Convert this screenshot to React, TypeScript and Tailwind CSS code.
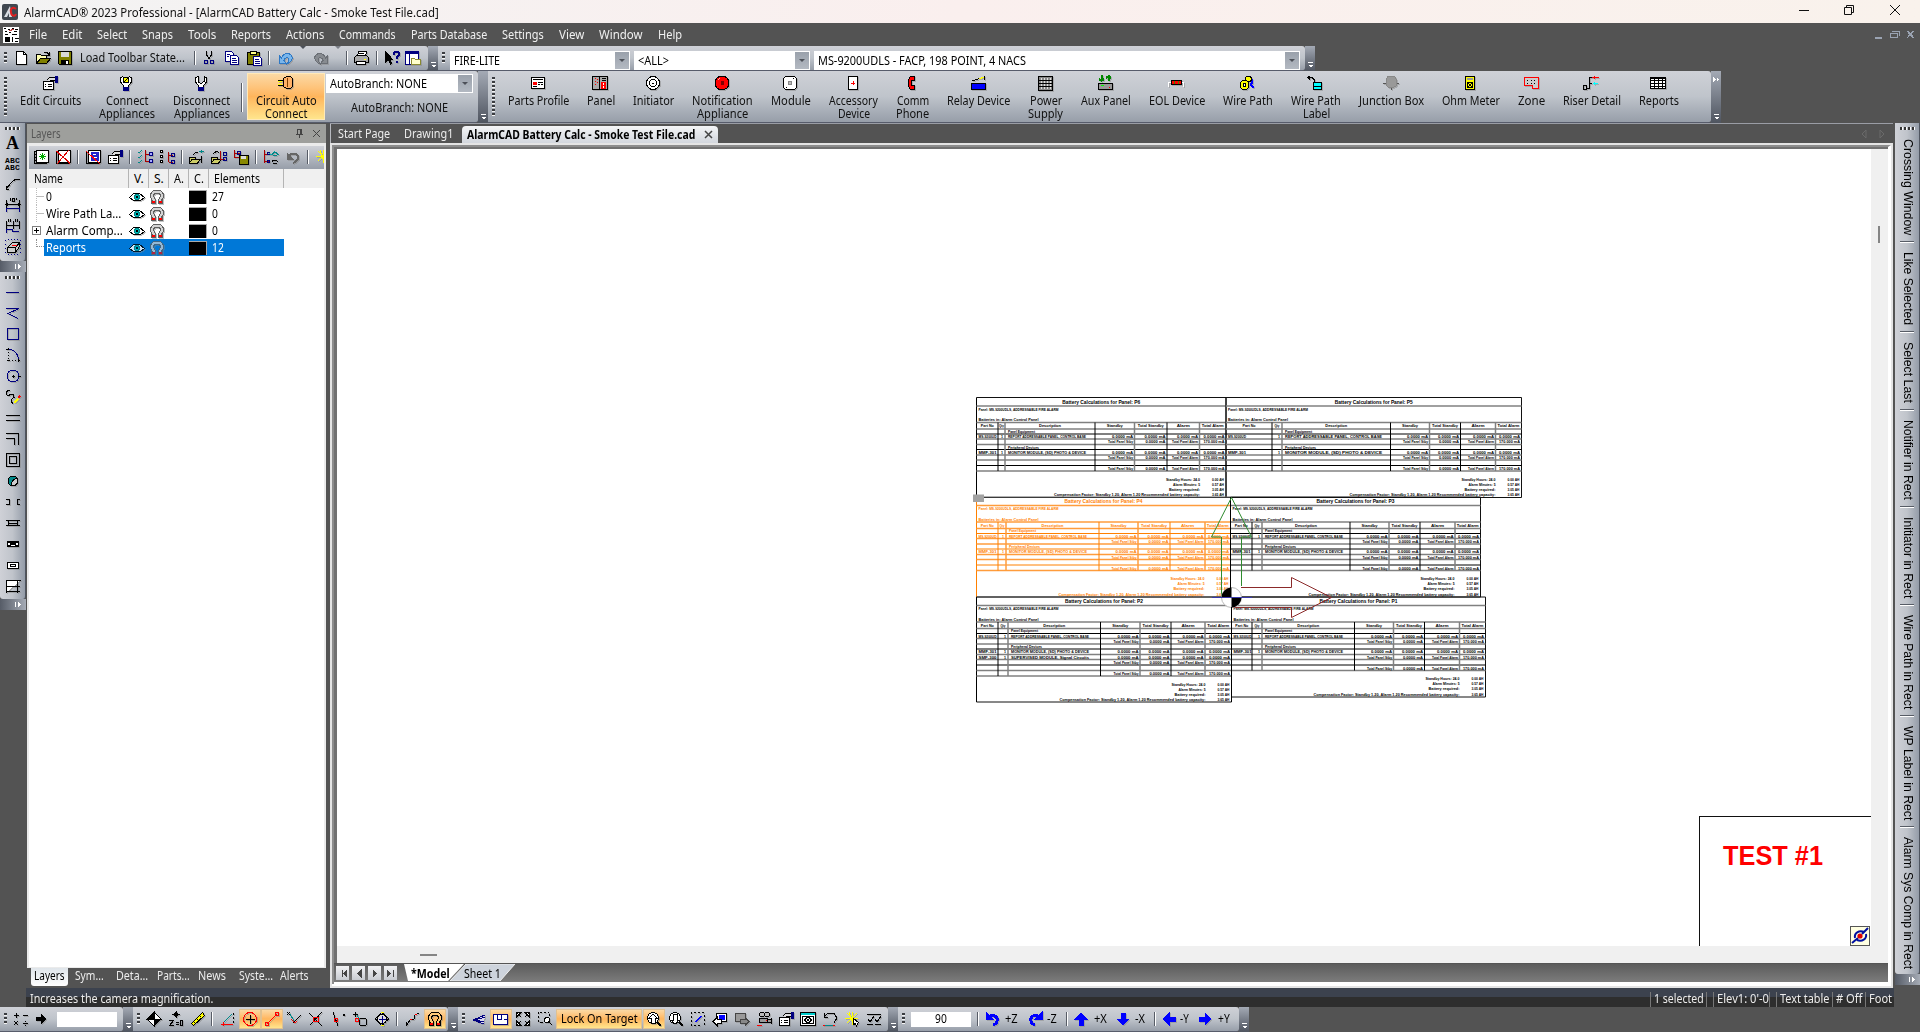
import { useLayoutEffect, useRef } from "react";
import type { ReactNode } from "react";

/* ---------- text that is fitted to the width (or height) of its box ---------- */
function Fit({ t, c = "", v = false }: { t: string; c?: string; v?: boolean }) {
  const outer = useRef<HTMLSpanElement>(null);
  const inner = useRef<HTMLSpanElement>(null);
  useLayoutEffect(() => {
    const o = outer.current;
    const i = inner.current;
    if (!o || !i) return;
    i.style.transform = v
      ? `scaleY(${o.clientHeight / i.offsetHeight})`
      : `scaleX(${o.clientWidth / i.offsetWidth})`;
  }, [t, v]);
  return (
    <span ref={outer} className={"block shrink-0 whitespace-nowrap " + c}>
      <span ref={inner} className={"inline-block " + (v ? "origin-top" : "origin-left")}>
        {t}
      </span>
    </span>
  );
}

/* ---------- icons: lists of [stroke, path, fill, stroke width] on a 16px grid ---------- */
type Shape = [string, string, string?, number?];
const K = "#000";
const N = "#000080";
const R = "#f00";
const W = "#fff";
const ring = (cx: number, cy: number, r: number) =>
  `M${cx - r} ${cy}a${r} ${r} 0 1 0 ${2 * r} 0a${r} ${r} 0 1 0 ${-2 * r} 0`;
const ARCH_OUT = "M2.500 14.500v-3h1L1.500 8V5l3-3.500h7l3 3.500v3l-2 3.500h1v3h-4v-4l2-3V6L10 4.500H6L4.500 6v1.500l2 3v4z";
const ARCH_TIPS = "M3 12h3v2H3zM10 12h3v2h-3z";

const icons: Record<string, Shape[]> = {
  fresh: [[K, "M3.5 1.5h7l3 3v10h-10z", W], [K, "M10.5 1.5v3h3"]],
  open: [[K, "M1.5 13.5v-9h4l1 1h5v3", "#ffffb0"], [K, "M1.5 13.5l4-5h10l-4 5z", "#808000"], [K, "M9 2.5h3l2 2M14.5 2v3h-3"]],
  save: [[K, "M1.5 1.5h13v13h-12l-1-1z", "#808000"], ["none", "M4 2h8v5H4z", "#d8d8d8"], ["none", "M4 10h8v4H4z", K], ["none", "M9 11h2v3H9z", W]],
  cut: [[K, "M5.5 1v4l3 4M10.5 1v4l-3 4"], [N, ring(5, 12, 2)], [N, ring(11, 12, 2)]],
  copy: [[N, "M1.5 1.5h6l2 2v8h-8z", W], [N, "M6.5 5.5h6l2 2v7h-8z", W], [N, "M3 4.5h3M3 6.5h2M8 8.5h4M8 10.5h5M8 12.5h5"]],
  paste: [[K, "M1.5 2.5h12v12h-12z", "#808000"], [K, "M4.5 1.5h6v3h-6z", "#ff8"], [N, "M7.5 6.5h6l2 2v7h-8z", W], [N, "M9 9.5h4M9 11.5h5M9 13.5h5"]],
  undo: [["#2f78c4", "M1.500 5.500v8h7L6 10.500C7 7 10 7 10.500 9c.3 2-.5 3-1.500 5C13 12 15 9 14 6.500 12.500 2.500 6 2 3.500 8z", "#79b6ec"]],
  redo: [["#6b6f75", "M14.500 5.500v8h-7L10 10.500C9 7 6 7 5.500 9c-.3 2 .5 3 1.500 5C3 12 1 9 2 6.500 3.500 2.500 10 2 12.500 8z", "#878b90"]],
  print: [[K, "M4.5 6.5l1-5h8l-1 5z", W], [K, "M1.5 7.5l2-2h10l2 2v5h-14z", "#aaa"], [K, "M3.5 11.5h9v3h-9z", W], [K, "M6 3.5h5"], ["none", "M11 9h2v1h-2z", "#ff0"]],
  whats: [[K, "M1.5 1.5v11l3-3 2 5 1-1-2-4h3z", K], [N, "M10 5V3l1-1h3l1 1v2l-2.500 2.500V9M12.500 11v2", "none", 2]],
  panes: [[N, "M.5 1.500h13v13h-13z", W], ["none", "M0 1h14v3H0z", N], [N, "M4.500 4v10"], ["#8a8a30", "M6.500 14.500v-6h3l1 1h5v5z", "#ffc"]],
  props: [[K, "M1.500 6.500h10v8h-10z", W], [K, "M3 9.500h1M6 9.500h4M3 11.500h1M6 11.500h4"], [K, "M5 5l3-3h5v3H9L7 7", "#ddd"], [N, "M13.500 1v6h2V1z", N]],
  plugOn: [[K, "M5 1.500L2.500 3v4l3 3.500v1.500h5v-1.500l3-3.500V3L11 1.500", W], [K, ring(8, 5, 3), "#ff0"], [K, "M6 7l4-4"], [N, "M5.500 12.500h5v3h-5z", N]],
  plugOff: [[K, "M5 1.500L2.500 3v4l3 3.500v1.500h5v-1.500l3-3.500V3L11 1.500v5L9 8H7L5 6.500z", W], [N, "M5.500 12.500h5v3h-5z", N]],
  auto: [[K, "M6.500 3.500l3-2h4l2 2v8l-2 2h-4l-3-2z", "#ffb066"], ["#804000", "M10.500 3v9"], [K, "M1 5.500h5M1 10.500h5"], ["#ff0", "M1 6.500h4M1 9.500h4"]],
  profile: [[K, "M1.500 2.500h13v11h-13z", W], [K, "M3 4.500h10M8 7.500h5M8 9.500h2M11 9.500h2"], ["none", "M3 7h4v3H3z", R], [K, "M3 11.500h4"]],
  panel: [[K, "M.5 1.500h15v13h-15z", "#aaa"], [K, "M7.500 2v12M10 3.500h4M10 5.500h4"], [R, "M3.500 3v1M3.500 6v1M3.500 9v1M5.500 4v1M5.500 7v1"], ["none", "M9 7h5v7H9z", R], [W, "M11.500 8v2M11.500 11v2"]],
  init: [[K, ring(8, 8, 6.500), W], [K, ring(8, 8, 3.500), W], [K, "M7 8.500h2"]],
  bell: [[K, ring(8, 8, 7), R], ["none", "M7 6h3v4H7z", "#800000"], ["#faa", "M4 5l2-2"]],
  module: [[K, "M3.500 1.500h9l2 2v9l-2 2h-9l-2-2v-9z", W], ["#888", ring(8, 8, 2), "#bbb"], [K, "M4 12.500h1M11 3.500h1"]],
  acc: [[K, "M3.500 1.500h9v13h-9z", W], [R, "M8 6v4M6 8h4"]],
  phone: [[K, "M10.500 1.500h-4l-2 3v7l2 3h4v-4h-3v-5h3z", R]],
  relay: [[K, "M1.500 8.500h14v6h-14z", "#00f"], [K, "M2 6l12-4v3"], ["#ff0", "M9 4l5-2"]],
  power: [[K, "M1.500 1.500h14v14h-14z", "#888"], ["#ddd", "M4.500 3v11M7.500 3v11M10.500 3v11M13 3v11"], [K, "M2 5.500h13M2 8.500h13M2 11.500h13"]],
  aux: [["#080", "M4.500 0v6M2 4l2.500 2L7 4M11.500 6V0M9 3l2.500-2L14 3", "none", 2], [K, "M1.500 8.500h14v6h-14z", "#999"], ["#0f0", "M4 10.500h3"], [R, "M12 12.500h1"]],
  eol: [[W, "M.5 12V7.500h3M15.500 12V7.500h-3"], [K, "M3.500 5.500h10v4h-10z", R], ["#480", "M6.500 6v3M10.500 6v3"]],
  wire: [["#00f", "M8 2c5-2 6 5 4 8l3 3", "none", 2], [K, ring(9.500, 4, 3), "#ff0"], [K, ring(5.500, 10, 4.500), "#ff0"], [K, ring(5.500, 10, 1.500), W]],
  wlabel: [[K, "M1 2.500h4l2 2v6M3 1l-2 1.500 2 2"], [K, "M6.500 7.500h8v7h-8z", "#0ff"], [K, "M7 11.500h7"]],
  junction: [["#555", "M0 8.500h16M8.500 1v14"], ["#888", "M4.500 1.500h7l2 3v6l-3 2h-5l-2-2v-6z", "#999"]],
  ohm: [[K, "M3.500 1.500h9v13h-9z", "#ff0"], ["none", "M5 3h6v2H5z", "#999"], [K, "M5 7l6 6M11 7l-6 6"], [K, ring(8, 10, 2.500)]],
  zone: [[R, "M1 2.500h14v11H9v-3H1z", "#ccc"], [K, "M4 5.500h1M7.500 5.500h1M11 5.500h1M4 8.500h1M7.500 8.500h1M11 8.500h1"]],
  riser: [[K, "M.5 10.500h3v4h-3zM4 13.500h2.500v-11H9M6.500 8.500H9"], [R, "M9 2.500h7M11.500 1v3"], ["#0ff", "M10 8.500h5M11.500 7v3"]],
  report: [[K, "M.5 2.500h15v11H.5z", W], [K, "M1 3.500h15M1 5.500h15M1 8.500h15M1 11.500h15M4.500 3v10M8.500 3v10M12.500 3v10"]],
  layerAdd: [[K, "M3.500 1.500h12v12h-12zM1.500 2.500h1M1.500 5.500h1M1.500 8.500h1M1.500 11.500h1", W], [K, "M1.500 2v12.500h12"], ["#0a0", "M9.500 4v7M6 7.500h7M7 5l5 5M12 5l-5 5"]],
  layerDel: [[K, "M3.500 1.500h12v12h-12z", W], [K, "M1.500 2v12.500h12"], ["#d00", "M1 2l14 12M14 1L2 15M2 2l13 13"]],
  layerRec: [[K, "M3.500 1.500h12v12h-12z", W], [K, "M1.500 2v12.500h12"], ["none", "M6 3h8v9H6z", "#22c"], [W, "M8 5.500h3M8 8.500h4"], [R, "M1 2l14 13"]],
  checkTree: [["#088", "M1 3l1 1 3-3M1 8l1 1 3-3M1 13l1 1 3-3"], ["#a00", "M8.500 1v12M8.500 5.500h4M8.500 12.500h4"], [N, "M12 3.500h3v3h-3zM12 10.500h3v3h-3z", "#aaf"]],
  boxTree: [[K, "M1.500 1.500h2v2h-2zM1.500 6.500h2v2h-2zM1.500 11.500h2v2h-2z", W], ["#a00", "M9.500 3v10M9.500 6.500h4M9.500 13.500h4"], [N, "M12 4.500h3v3h-3zM12 11.500h3v3h-3z"]],
  openEye: [[K, "M.5 14v-6h6v2M.5 14l3-4h8l-3 4z", "#cc6"], [K, "M4 6l3-3 2 1"], ["#088", "M10 2.500h5M12 1v3"], [K, "M12.500 7v7"]],
  openTree: [[K, "M.5 14v-6h6v2M.5 14l3-4h7l-3 4z", "#cc6"], [K, "M2 5l4-3 2 2"], ["#a00", "M9.500 2v8h4"], [N, "M12 3h3v3h-3zM12 8.500h3v3h-3z"]],
  treeSave: [["#a00", "M1.500 1v7h4M1.500 4h5"], [N, "M4 2.500h3v3H4z"], [K, "M6.500 6.500h9v9h-9z", "#880"], ["none", "M8 7h5v3H8z", "#ddd"]],
  treeEye: [["#a00", "M1.500 1v13M1.500 5h4M1.500 12h4"], [N, "M4 3.500h2v2H4zM4 11h2v2H4z"], ["#0aa", "M6 4l2 2 4-4"], ["#088", "M9 5.500c2-3 4-3 6 0-2 2-4 2-6 0"], [K, "M9 12.500c2-2 4-2 6 0M10 14h4"]],
  back: [["#666", "M4 7.500C6 3 14 4 13 9c-.3 2-2 3.500-5 5", "none", 2], ["#666", "M2 4v6h6z", "#666"]],
  eye: [[K, "M.5 8.500l4-4h6l5 4-4 3h-7z", W], ["#088", ring(8, 8, 2.500), "#0bb"], ["none", "M7 7h2v2H7z", K]],
  magnet: [["#606060", ARCH_OUT, "#d4d4d4"], ["none", ARCH_TIPS, R]],
  leader: [[K, "M1 14l6-7 3-2.500h5M1 11v3h3"]],
  dim: [[K, "M1.500 4v8M14.500 4v8M1 8.500h14M3 7l-2 1.500L3 10M13 7l2 1.500L13 10M5.500 2v3M7.500 2.500h2v3h-2zM11.500 2v2"], [N, "M1 15.500v-3h13v3"]],
  dims: [[K, "M1.500 4v8M8.500 4v8M14.500 4v8M1 8.500h14M3.500 2v3M5.500 2v3M10.500 2v3M12.500 2v3"], [N, "M1 15.500v-3h6v2h7"]],
  block: [[N, "M.5 1v1M3 .5h1M6 .5h1M9 .5h1M12 .5h1M15.500 1v1M.5 5v1M.5 9v1M.5 13v1M15.500 5v1M15.500 9v1M15.500 13v1M3 15.500h1M6 15.500h1M9 15.500h1M12 15.500h1"], [K, "M2.500 8.500l5-5h7v4l-4 6h-8z", "#ccc"], [K, "M2.500 8.500h8v5M10.500 8.500l4-5"], [R, "M7 6.500h5"]],
  line: [[N, "M1 8.500h13"]],
  poly: [[N, "M1 3.500h13L3 8.500l10 5"]],
  rect: [[N, "M2.500 2.500h11v11h-11z"]],
  arc: [[K, "M3.500 1v2M3.500 5v1M3.500 8v1M3.500 11v1M1 2.500h4M2 13.500h3M7 13.500h1M10 13.500h1M13 13.500h2M13.500 12v3"], [N, "M4 2.500c5 0 9 4 9.500 10"]],
  circle: [[N, ring(8, 8, 6)], [K, "M7 8.500h3M8.500 7v3M12.500 8.500h4"]],
  free: [[K, "M5 1.500H3l-2 2v2l2 1 3-1h2l1 3-3 2v2l2 2"], ["#ff0", "M9 14l4-4", "none", 2], [R, "M13 9l2-2", "none", 2]],
  par: [[K, "M1 5.500h14M1 10.500h14"]],
  corner: [[K, "M1 2.500h12.500V14M1 7.500h8.500V14"]],
  dbl: [[K, "M1.500 1.500h13v13h-13zM4.500 4.500h7v7h-7z"]],
  blob: [[K, ring(8, 8, 5), "#088"], [K, "M7 12c-1-4 2-6 5-7l1 4-3 4z", "#ccc"]],
  gap: [[K, "M1 5.500h3v5H1M15 5.500h-3v5h3"]],
  door: [[K, "M1 5.500h14M1 10.500h14M3.500 5v5M12.500 5v5M4 8.500h8", W]],
  win: [[K, "M2.500 5.500h11v5h-11z", W], [K, "M3 6l10 4M13 6L3 10"], [K, "M2 6h12"]],
  slot: [[K, "M2.500 5.500h11v6h-11z", W], [K, "M5.500 7.500h5v2h-5z"]],
  wall: [[K, "M1.500 14.500v-12h14M1 8.500h14M12.500 2v13M1 13.500h14", W]],
  calc: [[K, "M1 4.500h5M3.500 2v5M10 4.500h5M1 10l4 4M5 10l-4 4M10 12.500h5M12.500 9.500v1M12.500 14v1"]],
  go: [[K, "M3 6.500h5V3l5 5-5 5V9.500H3z", K]],
  target: [[K, "M8 1l7 7-7 7-7-7z", W], ["none", "M8 1v7H1zM8 8h7l-7 7z", K], [K, "M8 0v16M0 8h16"]],
  z0: [[K, "M8 0v7M8 1l2 2.500L8 6 6 3.500zM4 3.500h8", K], [K, "M1 9.500h4.500l-4 5H6M8 11h3M8 13h3M12.500 9.500h2v5h-2z"]],
  ruler: [[K, "M1.500 12.500l11-11 2 3-11 10z", "#ff0"], [K, "M4 11l1 1M7 8l1 1M10 5l1 1"]],
  tri: [[R, "M1 13.500h12M3 11v4"], ["#088", "M4 11l8-8"], [K, "M13.500 2v2M13.500 6v2M13.500 10v2"]],
  snapC: [[R, ring(8, 8, 6.500)], [K, "M8.500 4v9M4 8.500h9"]],
  snapE: [[R, "M3 13L13 3"], [R, ring(3, 13, 2)], [R, ring(13, 3, 2)]],
  snapV: [[K, "M1 1l4 4M1 4l3-3M7 12l8-8"], [R, "M5 8l4 4 2-2"], ["#088", "M4 3l4 7"]],
  snapX: [[K, "M1 2l13 13M14 1L2 14"], [R, "M5.500 6.500h5v4h-5z"]],
  snapN: [[K, "M3 1l5 14M13 3l2 2M15 3l-2 2"], [R, ring(6, 9, 2)]],
  snapT: [[K, ring(11, 11, 4)], [R, ring(5, 9, 2)], [K, "M1 3.500h5M3.500 1v5"], ["#088", "M5 4l3 5"]],
  snapQ: [[K, "M8 1l3 4 4 3-4 3-3 4-3-4-4-3 4-3z"], [K, ring(8, 8, 4.500), "#ddd"], ["#ff0", "M7 1.500h3M7 14.500h3"], [N, "M8.500 5v7M5 8.500h7"]],
  track: [[K, "M2 14l3-5 4-1 1-4 4-2M1 11v4"], [R, "M5 8.500h2M10 3.500h2"]],
  magnetK: [[K, ARCH_OUT, "#ffc878"], ["none", ARCH_TIPS, R]],
  iso: [[N, "M14 4L2 9l11 4M14 6L4 9l9 2M2 9l6 2", "#dde"]],
  plan: [[N, "M.5 3.500h14v10H.5z", W], [N, "M4.500 4v4M8.500 4v5M11 8.500h3M4 8.500h4"]],
  fit: [[K, "M1.500 6V1.500H6zM10 1.500h4.500V6zM14.500 10v4.500H10zM6 14.500H1.500V10z", W], [K, "M2 2l4 4M14 2l-4 4M14 14l-4-4M2 14l4-4"]],
  zoomWin: [[K, "M1.500 1v2M1.500 5v2M1.500 9v2M3 1.500h2M7 1.500h2M11 1.500h1M12.500 3v2M3 11.500h3"], [K, ring(10, 9, 2.500), W], [K, "M12 11l3 3"]],
  zoomIn: [[K, ring(7, 7, 5.500), W], [K, "M11 11l4 4", "none", 2], [K, "M7 3l4 4H9v5H5V7H3z", W]],
  zoomOut: [[K, ring(7, 7, 5.500), W], [K, "M11 11l4 4", "none", 2], [K, "M7 13l4-4H9V3H5v6H3z", W]],
  sel: [[K, "M1.500 1v2M1.500 5v2M1.500 9v2M1.500 13v2M4 1.500h2M8 1.500h2M12 1.500h2M14.500 4v2M14.500 8v2M14.500 12v2M4 14.500h2M8 14.500h2"], ["#00f", "M5 11l6-6M6 11l6-6"]],
  prev: [[K, "M4.500 2.500h10v8h-10z", W], ["none", "M7 4h6v5H7z", "#00f"], [K, "M1 10.500l4-4v2h4v4H5v2z", W]],
  next: [["#444", "M1.500 2.500h10v8h-10z", "#999"], ["#444", "M15 10.500l-4-4v2H6v4h5v2z", "#888"]],
  cam: [[K, ring(6, 3.500, 2.500), "#bbb"], [K, ring(11, 3.500, 2.500), "#bbb"], [K, "M3.500 7.500h8v4h-8zM12 9l3-1v4l-3-1", "#999"], [R, "M1 14.500h5M10 9.500h1"]],
  frame: [[K, "M.5 1.500h15v13H.5z", W], ["#0cc", "M1 3h14", "none", 2], [K, "M2.500 5.500h11v7h-11z"], [K, "M8 5.500l3.500 3.500L8 12.500 4.500 9z", W], ["none", "M7 8h2v2H7z", K]],
  turn: [[K, "M2 6l4-4M6 2.500h6l2 3v3l-2 3M2 2v4.500h4"], ["#088", "M3 14.500h8"], [R, "M1 14.500h2M11 14.500h2"]],
  burst: [["#ff0", "M8 1v13M1 7h13M3 2l10 10M13 2L3 12M5 1l4 12"], [K, "M9.500 7.500v6l2-1 1 3 1-3 1-1z", W]],
  checks: [[K, "M1 3.500h14M1 13.500h6M9 13.500h6M2 8l2 3 4-6M9 8l2 3 4-6"]],
  rotL: [["#00f", "M4 5.500c7-3 10 2 7 7l-3 1.500", "none", 3], ["#00f", "M1 1.500v7h7z", "#00f"]],
  rotR: [["#00f", "M12 5.500c-7-3-10 2-7 7l3 1.500", "none", 3], ["#00f", "M15 1.500v7H8z", "#00f"]],
  up: [["#00f", "M8 2l6 6h-4v6H6V8H2z", "#00f"]],
  down: [["#00f", "M8 14l6-6h-4V2H6v6H2z", "#00f"]],
  left: [["#00f", "M2 8l6-6v4h6v4H8v4z", "#00f"]],
  right: [["#00f", "M14 8L8 2v4H2v4h6v4z", "#00f"]],
};

function Ico({ n, c = "" }: { n: string; c?: string }) {
  return (
    <svg viewBox="0 0 16 16" width="16" height="16" shapeRendering="crispEdges" className={"shrink-0 drop-shadow-[1px_1px_0_#88888880] " + c}>
      {icons[n].map(([s, d, f, w], i) => (
        <path key={i} d={d} stroke={s} fill={f ?? "none"} strokeWidth={w ?? 1} />
      ))}
    </svg>
  );
}

const Grip = ({ c = "" }: { c?: string }) => (
  <span className={"w-[3px] shrink-0 bg-[repeating-linear-gradient(180deg,#3a3c40_0_2px,#f4f4f4_2px_3px,transparent_3px_4px)] " + c} />
);
const HGrip = ({ c = "" }: { c?: string }) => (
  <span className={"h-[3px] w-[15px] shrink-0 bg-[repeating-linear-gradient(90deg,#333_0_2px,#fff_2px_3px,transparent_3px_4px)] " + c} />
);
const Sep = ({ c = "" }: { c?: string }) => (
  <span className={"w-[2px] shrink-0 border-l border-[#575c66] bg-white " + c} />
);
const Tri = ({ c = "border-t-[#4c5058]" }: { c?: string }) => (
  <span className={"h-0 w-0 border-x-[3px] border-t-[3px] border-x-transparent " + c} />
);

function Overflow({ more = false, c = "" }: { more?: boolean; c?: string }) {
  return (
    <span className={"flex w-[10px] shrink-0 flex-col items-center justify-between self-stretch bg-gradient-to-b from-[#a4aab5] to-[#4f5560] pb-[3px] pt-[6px] " + c}>
      <svg width="7" height="5" viewBox="0 0 7 5" shapeRendering="crispEdges" fill="#fff">
        {more && <path d="M0 0l3 2.500L0 5zM3.500 0l3 2.500-3 2.500z" />}
      </svg>
      <svg width="7" height="7" viewBox="0 0 7 7" shapeRendering="crispEdges">
        <path d="M1 1.500h5" stroke="#fff" />
        <path d="M2 4h4l-2 2.500z" fill="#fff" />
      </svg>
    </span>
  );
}

function Combo({ c, text, tc }: { c: string; text: string; tc: string }) {
  return (
    <div className={"flex shrink-0 items-center border border-white bg-white pl-[3px] text-black " + c}>
      <Fit t={text} c={tc} />
      <span className="ml-auto flex h-full w-[14px] items-center justify-center bg-gradient-to-b from-[#9aa1ab] to-[#b3b9c2]">
        <Tri />
      </span>
    </div>
  );
}

const BAR = "bg-gradient-to-b from-[#cfd1d7] via-[#bfc4cb] to-[#979ea9] border-b border-[#575c6b] rounded-r-[3px]";
const HOT = "bg-gradient-to-b from-[#fbd9a4] via-[#ffb55c] to-[#ffe58c]";

const menus: [string, string][] = [
  ["File", "w-[18px]"], ["Edit", "w-5"], ["Select", "w-[30px]"], ["Snaps", "w-[31px]"], ["Tools", "w-[28px]"],
  ["Reports", "w-10"], ["Actions", "w-[38px]"], ["Commands", "w-[57px]"], ["Parts Database", "w-[76px]"],
  ["Settings", "w-[42px]"], ["View", "w-[25px]"], ["Window", "w-11"], ["Help", "w-6"],
];

function ToolRow1() {
  return (
    <div className="flex h-[25px]">
      <div className={"flex w-[428px] items-center pl-1 " + BAR}>
        <Grip c="h-3" />
        <Ico n="fresh" c="ml-[6px]" />
        <Ico n="open" c="ml-[6px]" />
        <Ico n="save" c="ml-[6px]" />
        <Fit t="Load Toolbar State..." c="ml-[7px] w-[105px]" />
        <Sep c="ml-[9px] h-3.5" />
        <Ico n="cut" c="ml-[5px]" />
        <Ico n="copy" c="ml-[7px]" />
        <Ico n="paste" c="ml-[6px]" />
        <Sep c="ml-[6px] h-3.5" />
        <Ico n="undo" c="ml-[8px]" />
        <span className="ml-[6px]"><Tri /></span>
        <Ico n="redo" c="ml-[7px]" />
        <span className="ml-[6px]"><Tri c="border-t-[#7c8088]" /></span>
        <Sep c="ml-[5px] h-3.5" />
        <Ico n="print" c="ml-[5px]" />
        <Sep c="ml-[7px] h-3.5" />
        <Ico n="whats" c="ml-[6px]" />
        <Ico n="panes" c="ml-[5px]" />
      </div>
      <Overflow />
      <div className={"flex w-[867px] pl-1 " + BAR}>
        <Grip c="mt-[6px] h-3" />
        <Combo c="ml-[5px] mt-[5px] h-[19px] w-[180px]" text="FIRE-LITE" tc="w-[46px]" />
        <Combo c="ml-1 mt-[5px] h-[19px] w-[176px]" text="<ALL>" tc="w-[31px]" />
        <Combo c="ml-1 mt-[5px] h-[19px] w-[486px]" text="MS-9200UDLS - FACP, 198 POINT, 4 NACS" tc="w-[208px]" />
      </div>
      <Overflow />
    </div>
  );
}

type Part = [string, string, string, string?, string?];
const parts: Part[] = [
  ["profile", "Parts Profile", "w-[61px]"],
  ["panel", "Panel", "w-7"],
  ["init", "Initiator", "w-[41px]"],
  ["bell", "Notification", "w-[61px]", "Appliance", "w-[51px]"],
  ["module", "Module", "w-10"],
  ["acc", "Accessory", "w-[49px]", "Device", "w-8"],
  ["phone", "Comm", "w-8", "Phone", "w-[33px]"],
  ["relay", "Relay Device", "w-[63px]"],
  ["power", "Power", "w-8", "Supply", "w-[35px]"],
  ["aux", "Aux Panel", "w-[50px]"],
  ["eol", "EOL Device", "w-14"],
  ["wire", "Wire Path", "w-[50px]"],
  ["wlabel", "Wire Path", "w-[50px]", "Label", "w-[27px]"],
  ["junction", "Junction Box", "w-[65px]"],
  ["ohm", "Ohm Meter", "w-[58px]"],
  ["zone", "Zone", "w-[27px]"],
  ["riser", "Riser Detail", "w-[58px]"],
  ["report", "Reports", "w-10"],
];

function Big({ p, c = "" }: { p: Part; c?: string }) {
  const [icon, a, aw, b, bw] = p;
  return (
    <div className={"flex shrink-0 flex-col items-center pt-1 " + c}>
      <Ico n={icon} c="-ml-[2px]" />
      <Fit t={a} c={"mt-[3px] h-[13px] leading-[13px] " + aw} />
      {b && <Fit t={b} c={"h-[13px] leading-[13px] " + bw} />}
    </div>
  );
}

function ToolRow2() {
  return (
    <div className="flex h-[52px]">
      <div className={"flex w-[478px] pl-1 " + BAR}>
        <Grip c="mt-[6px] h-[39px]" />
        <Big p={["props", "Edit Circuits", "w-[61px]"]} c="ml-[13px]" />
        <Big p={["plugOn", "Connect", "w-[43px]", "Appliances", "w-14"]} c="ml-[18px]" />
        <Big p={["plugOff", "Disconnect", "w-[57px]", "Appliances", "w-14"]} c="ml-[18px]" />
        <Sep c="ml-[11px] mt-3 h-[29px]" />
        <div className={"ml-[4px] mt-[2px] h-[47px] w-[78px] border border-[#ffe9b8] " + HOT}>
          <Big p={["auto", "Circuit Auto", "w-[61px]", "Connect", "w-[43px]"]} c="-mt-[3px]" />
        </div>
        <div className="ml-px mt-[3px] flex flex-col items-center">
          <Combo c="h-[19px] w-[147px]" text="AutoBranch: NONE" tc="w-[97px]" />
          <Fit t="AutoBranch: NONE" c="mt-[7px] w-[97px]" />
        </div>
      </div>
      <Overflow />
      <div className={"flex w-[1223px] pl-1 " + BAR}>
        <Grip c="mr-[13px] mt-[6px] h-[39px]" />
        <div className="flex gap-[18px]">
          {parts.map((p, i) => (
            <Big key={i} p={p} />
          ))}
        </div>
      </div>
      <Overflow more />
    </div>
  );
}

const VBAR = "bg-gradient-to-r from-[#cfd1d7] via-[#c0c4cb] to-[#949ca8] border-r border-[#4f5560] rounded-b-[3px]";
const VOver = () => (
  <div className="flex h-[11px] w-full shrink-0 items-center justify-end bg-gradient-to-r from-[#565c67] to-[#a6acb6] pr-[4px]">
    <svg width="7" height="7" viewBox="0 0 7 7" shapeRendering="crispEdges">
      <path d="M.5 1v5" stroke="#fff" />
      <path d="M3 1l3.500 2.500L3 6z" fill="#fff" />
    </svg>
  </div>
);

function LeftBar() {
  return (
    <div className="flex w-[26px] shrink-0 flex-col">
      <div className={"flex h-[138px] flex-col items-center pt-1 " + VBAR}>
        <HGrip />
        <span className="mt-[4px] h-[18px] font-['Liberation_Serif'] text-[18px] font-bold leading-[18px] text-black">A</span>
        <span className="mt-[5px] w-[15px] font-['Liberation_Mono'] text-[8px] font-bold leading-[7px] tracking-[0.2px] text-black">ABC ABC</span>
        <Ico n="leader" c="mt-[4px]" />
        <Ico n="dim" c="mt-[5px]" />
        <Ico n="dims" c="mt-[5px]" />
        <Ico n="block" c="mt-[6px]" />
      </div>
      <VOver />
      <div className={"flex h-[327px] flex-col items-center pt-1 " + VBAR}>
        <HGrip c="mb-[5px]" />
        <div className="flex flex-col gap-[5px]">
          {["line", "poly", "rect", "arc", "circle", "free", "par", "corner", "dbl", "blob", "gap", "door", "win", "slot", "wall"].map((n) => (
            <Ico key={n} n={n} />
          ))}
        </div>
      </div>
      <VOver />
    </div>
  );
}

const layerRows: [string, string, string, boolean, boolean][] = [
  ["0", "w-[6px]", "27", false, false],
  ["Wire Path La...", "w-[75px]", "0", false, false],
  ["Alarm Comp...", "w-[77px]", "0", true, false],
  ["Reports", "w-10", "12", false, true],
];

function LayersPanel() {
  return (
    <div className="ml-px flex w-[299px] shrink-0 flex-col">
      <div className="flex h-[861px] flex-col">
        <div className="mt-px flex h-[19px] shrink-0 items-center bg-[#9e9f9c] pl-1 pr-[5px] text-[#555]">
          <Fit t="Layers" c="w-[30px]" />
          <svg className="ml-auto" width="9" height="9" viewBox="0 0 9 9" shapeRendering="crispEdges" fill="none" stroke="#444">
            <path d="M2.500 0v5M6.500 0v5M2 .5h5M1 5.500h7M4.500 5v4M5.500 0v5" />
          </svg>
          <svg className="ml-[8px]" width="9" height="9" viewBox="0 0 9 9" stroke="#444">
            <path d="M1 1l7 7M8 1L1 8" />
          </svg>
        </div>
        <div className="flex flex-1 flex-col border-x-2 border-b border-t-[3px] border-[#ebebeb] bg-white">
          <div className="flex h-[23px] shrink-0 items-center overflow-hidden bg-gradient-to-b from-[#d0d2d8] to-[#979ea9] pb-[2px] pl-[4px]">
            <Ico n="layerAdd" />
            <Ico n="layerDel" c="ml-[6px]" />
            <Sep c="ml-[6px] h-3.5" />
            <Ico n="layerRec" c="ml-[6px]" />
            <Ico n="props" c="ml-[6px]" />
            <Sep c="ml-[6px] h-3.5" />
            <Ico n="checkTree" c="ml-[6px]" />
            <Ico n="boxTree" c="ml-[6px]" />
            <Sep c="ml-[6px] h-3.5" />
            <Ico n="openEye" c="ml-[6px]" />
            <Ico n="openTree" c="ml-[6px]" />
            <Ico n="treeSave" c="ml-[6px]" />
            <Sep c="ml-[6px] h-3.5" />
            <Ico n="treeEye" c="ml-[6px]" />
            <Ico n="back" c="ml-[6px]" />
            <Sep c="ml-[6px] h-3.5" />
            <Ico n="burst" c="ml-[6px]" />
          </div>
          <div className="flex h-[19px] shrink-0 items-center bg-[#f0f0f0] text-black">
            <span className="flex h-full w-[100px] items-center border-r border-[#b4b4b4] pl-[5px]"><Fit t="Name" c="w-[29px]" /></span>
            {["V.", "S.", "A.", "C."].map((t) => (
              <span key={t} className="flex h-full w-5 items-center border-r border-[#b4b4b4] pl-[5px]"><Fit t={t} c="w-[10px]" /></span>
            ))}
            <span className="flex h-full w-[75px] items-center border-r border-[#b4b4b4] pl-[5px]"><Fit t="Elements" c="w-[46px]" /></span>
          </div>
          {layerRows.map(([name, w, count, plus, on]) => (
            <div key={name} className={"flex h-[17px] shrink-0 items-center " + (on ? "text-white" : "text-black")}>
              <span className="flex h-full w-[15px] items-center pl-[3px]">
                {plus ? (
                  <span className="flex h-[9px] w-[9px] items-center justify-center border border-[#808080] bg-white">
                    <svg width="5" height="5" viewBox="0 0 5 5" shapeRendering="crispEdges"><path d="M0 2.500h5M2.500 0v5" stroke="#000" /></svg>
                  </span>
                ) : (
                  <span className={"ml-1 w-[8px] border-l border-dotted border-[#909090] " + (on ? "mb-auto h-2 border-b" : "h-full bg-[linear-gradient(#909090,#909090)] bg-[length:100%_1px] bg-center bg-no-repeat opacity-60")} />
                )}
              </span>
              <span className={"flex h-full w-[240px] items-center pl-[2px] " + (on ? "bg-[#0078d7]" : "")}>
                <span className="w-[83px]"><Fit t={name} c={w} /></span>
                <Ico n="eye" c={on ? "opacity-80" : ""} />
                <Ico n="magnet" c={"ml-1 " + (on ? "opacity-70" : "")} />
                <span className="ml-[24px] h-[14px] w-[18px] shrink-0 border-r border-t border-[#aaa] bg-black" />
                <Fit t={count} c={"ml-[5px] " + (count.length > 1 ? "w-3" : "w-[6px]")} />
              </span>
            </div>
          ))}
        </div>
      </div>
      <div className="flex h-5 items-start pl-1 text-[#ececec]">
        <span className="flex h-[18px] w-[37px] items-start justify-center rounded-b-[3px] bg-gradient-to-b from-[#dfe5ea] to-white text-black"><Fit t="Layers" c="w-[31px]" /></span>
        <Fit t="Sym..." c="ml-[7px] w-[29px]" />
        <Fit t="Deta..." c="ml-3 w-8" />
        <Fit t="Parts..." c="ml-[9px] w-[33px]" />
        <Fit t="News" c="ml-[8px] w-7" />
        <Fit t="Syste..." c="ml-[13px] w-[34px]" />
        <Fit t="Alerts" c="ml-[7px] w-[29px]" />
      </div>
    </div>
  );
}

/* ---------- drawing on the canvas ---------- */
interface Calc {
  x0: number; x1: number; y: number; cols: number[]; p: string; color: string; extra?: boolean; dw?: number;
}
const calcs: Calc[] = [
  { x0: 976.5, x1: 1226, y: 397.5, cols: [998, 1005, 1095, 1134.500, 1167, 1199.500], p: "P6", color: "#000" },
  { x0: 1226, x1: 1521.500, y: 397.5, cols: [1272, 1282, 1390.500, 1429.500, 1460.500, 1495.500], p: "P5", color: "#000", dw: 97 },
  { x0: 976.5, x1: 1230.5, y: 497, cols: [998, 1006, 1099, 1138, 1170, 1205], p: "P4", color: "#ff8000" },
  { x0: 1230.500, x1: 1480.500, y: 497, cols: [1252, 1262, 1350, 1389, 1420, 1455], p: "P3", color: "#000" },
  { x0: 976.5, x1: 1231.5, y: 597, cols: [998, 1008, 1100.500, 1140, 1171, 1205], p: "P2", color: "#000", extra: true },
  { x0: 1231.500, x1: 1485.500, y: 597, cols: [1252, 1262, 1354.500, 1393.500, 1424.500, 1459.500], p: "P1", color: "#000" },
];

function Txt({ x, y, w, s, a = "start", f, b = 700, z = 4.300 }: { x: number; y: number; w: number; s: string; a?: "start" | "middle" | "end"; f: string; b?: number; z?: number }) {
  return (
    <text x={x} y={y} textLength={w} lengthAdjust="spacingAndGlyphs" textAnchor={a} fill={f} fontWeight={b} fontSize={z} fontFamily="Liberation Sans">
      {s}
    </text>
  );
}

function CalcTable({ x0, x1, y, cols, p, color, extra, dw = 78 }: Calc) {
  const lines = [25, 31.500, 36.500, 41.500, 47, 52, 57.500, 62.500, 68, 73.500];
  if (extra) lines.push(79);
  const end = lines[lines.length - 1];
  const height = extra ? 105 : 100;
  const soft = color === "#000" ? "#808080" : "#ff9c3c";
  const cx = (x0 + x1) / 2;
  const heads = ["Part No", "Qty", "Description", "Standby", "Total Standby", "Alarm", "Total Alarm"];
  const edge = [x0, ...cols, x1];
  const item = (yy: number, part: string, desc: string, k: string) => (
    <g key={k}>
      <Txt x={x0 + 2} y={yy} w={18} s={part} f={color} />
      <Txt x={cols[1] - 4} y={yy} w={2} s="1" f={color} />
      <Txt x={cols[1] + 3} y={yy} w={dw} s={desc} f={color} />
      {[3, 4, 5, 6].map((i) => (
        <Txt key={i} x={edge[i + 1] - 1.500} y={yy} w={21} s="0.0000 mA" a="end" f={color} />
      ))}
    </g>
  );
  const total = (yy: number, k: string) => (
    <g key={k}>
      <Txt x={edge[4] - 1.500} y={yy} w={25} s="Total Panel Stby" a="end" f={color} />
      <Txt x={edge[5] - 1.500} y={yy} w={20} s="0.0000 mA" a="end" f={color} />
      <Txt x={edge[6] - 1.500} y={yy} w={26} s="Total Panel Alarm" a="end" f={color} />
      <Txt x={edge[7] - 1.500} y={yy} w={21} s="170.000 mA" a="end" f={color} />
    </g>
  );
  return (
    <g>
      <path d={`M${x0} ${y + height}V${y}`} stroke={color} fill="none" />
      <path d={`M${x0} ${y + height}H${x1}M${x1} ${y}V${y + height}M${x0} ${y}H${x1}`} stroke={color === "#000" ? "#111" : "#666"} fill="none" />
      <path d={`M${x0} ${y + 8.500}H${x1}`} stroke={soft} strokeWidth="1.500" />
      {lines.map((l, i) => (
        <path key={l} d={`M${x0} ${y + l}H${x1}`} stroke={i % 3 === 2 ? color : soft} strokeWidth={i % 3 === 2 ? 1 : 1.500} />
      ))}
      {cols.map((c, i) => (
        <path key={c} d={`M${c} ${y + 25}V${y + end}`} stroke={i % 2 ? soft : color} strokeWidth={i % 2 ? 1.500 : 1} />
      ))}
      <Txt x={cx} y={y + 6} w={78} s={`Battery Calculations for Panel: ${p}`} a="middle" f={color} z={5} />
      <Txt x={x0 + 2} y={y + 13} w={80} s="Panel: MS-9200UDLS, ADDRESSABLE FIRE ALARM" f={color} />
      <Txt x={x0 + 2} y={y + 23.500} w={60} s="Batteries in: Alarm Control Panel" f={color} />
      {heads.map((h, i) => (
        <Txt key={h} x={(edge[i] + edge[i + 1]) / 2} y={y + 29.500} w={[13, 5, 22, 16, 26, 13, 22][i]} s={h} a="middle" f={color} />
      ))}
      <Txt x={cols[1] + 3} y={y + 35.300} w={27} s="Panel Equipment" f={color} />
      {item(y + 40.500, "MS-9200UD", "REPORT ADDRESSABLE PANEL, CONTROL BASE", "a")}
      {total(y + 45.800, "b")}
      <Txt x={cols[1] + 3} y={y + 51} w={31} s="Peripheral Devices" f={color} />
      {item(y + 56.300, "MMF-301", "MONITOR MODULE, (SD) PHOTO & DEVICE", "c")}
      {extra ? item(y + 61.500, "SMF-300", "SUPERVISED MODULE, Signal Circuits", "s") : null}
      {total(y + (extra ? 67 : 61.800), "d")}
      {total(y + end - 0.800, "e")}
      {["Standby Hours: 24.0", "Alarm Minutes: 5", "Battery required:", "Compensation Factor: Standby 1.20, Alarm 1.20    Recommended battery capacity:"].map((s, i) => (
        <g key={s}>
          <Txt x={x1 - 26} y={y + end + 9.500 + i * 5.200} w={[34, 27, 31, 146][i]} s={s} a="end" f={color} />
          <Txt x={x1 - 2} y={y + end + 9.500 + i * 5.200} w={12} s={["0.00 AH", "0.57 AH", "3.05 AH", "3.65 AH"][i]} a="end" f={color} />
        </g>
      ))}
    </g>
  );
}

function Canvas() {
  return (
    <svg viewBox="337 149 1534 797" width="1534" height="797" className="block shrink-0 bg-white">
      {calcs.map((c) => (
        <CalcTable key={c.p} {...c} />
      ))}
      <rect x="973" y="494.500" width="11" height="7.500" fill="#a3a3a3" />
      <path d="M1221.500 597V537h-10l20-39.500 20 39.500h-10v49" fill="none" stroke="#2e8b2e" />
      <path d="M1241 587.500h50.500v-10l40 20-40 20v-10h-60" fill="none" stroke="#8b2a2a" />
      <circle cx="1231.500" cy="597.500" r="10" fill="#fff" stroke="#bbb" />
      <path d="M1231.500 597.500h-10a10 10 0 0 1 10-10zM1231.500 597.500h10a10 10 0 0 1-10 10z" fill="#000" />
      <path d="M1212 597.500h40" stroke="#3838a8" />
      <path d="M1230.500 502v86M1231.500 607v95" stroke="#000" />
      <path d="M1699.500 946V816.500h171" fill="none" stroke="#111" shapeRendering="crispEdges" />
      <text x="1723" y="864.500" textLength="100" lengthAdjust="spacingAndGlyphs" fontSize="27" fontWeight="700" fill="#f00" fontFamily="Liberation Sans">
        TEST #1
      </text>
      <rect x="1850.500" y="926.500" width="19" height="19" fill="#ffffe1" stroke="#555" />
      <path d="M1852 943l6-5M1862 934l6-6M1855 938c-1-5 4-8 9-6M1866 934c1 5-4 8-9 6" stroke="#0010a0" strokeWidth="2" fill="none" />
      <circle cx="1860" cy="936" r="2.600" fill="#e00000" />
    </svg>
  );
}

const navs = ["M4 1v7M9 1L5.500 4.500 9 8z", "M7 1L3.500 4.500 7 8z", "M3 1l3.500 3.500L3 8z", "M1 1l3.500 3.500L1 8zM7 1v7"];

function Doc() {
  return (
    <div className="ml-[4px] flex w-[1563px] shrink-0 flex-col border-t border-[#9a9da5]">
      <div className="flex h-[19px] items-start border-l border-[#b8bac0] pl-[7px] text-[#ececec]">
        <Fit t="Start Page" c="mt-[2px] w-[52px]" />
        <Fit t="Drawing1" c="ml-[14px] mt-[2px] w-[49px]" />
        <span className="ml-[9px] mt-[2px] flex h-[17px] w-[256px] items-center rounded-t-[4px] bg-gradient-to-b from-[#f4f5f7] to-[#d2d6dd] pl-[5px] font-bold text-black">
          <Fit t="AlarmCAD Battery Calc - Smoke Test File.cad" c="w-[228px]" />
          <svg className="ml-[9px]" width="9" height="9" viewBox="0 0 9 9" stroke="#444" strokeWidth="1.500"><path d="M1 1l7 7M8 1L1 8" /></svg>
        </span>
        <svg className="ml-auto mr-[7px] mt-[5px]" width="26" height="10" viewBox="0 0 26 10" fill="none" stroke="#6a6a6a"><path d="M6 1v8L2 5zM20 1v8l4-4z" /></svg>
      </div>
      <div className="flex h-[845px] flex-col border-2 border-[#e4e4e4] bg-white">
        <div className="flex flex-1 flex-col border-2 border-b-0 border-r-[3px] border-[#8d8d8d] border-r-white">
          <div className="flex h-[816px] flex-col border-l-[3px] border-t-2 border-[#707070]">
            <div className="flex h-[797px]">
              <Canvas />
              <div className="flex w-[17px] justify-center bg-[#f0f0f0] pt-[77px]"><span className="mr-px h-[17px] w-[2px] bg-[#858585]" /></div>
            </div>
            <div className="flex h-[17px] items-center bg-[#f0f0f0] pl-[83px]"><span className="h-[2px] w-[17px] bg-[#858585]" /></div>
          </div>
          <div className="flex h-[19px] border-t border-[#555] bg-gradient-to-b from-[#5c5c5c] to-[#7c7c7c] pl-[2px] text-black">
            <div className="mt-[2px] flex gap-[3px]">
              {navs.map((d) => (
                <span key={d} className="flex h-[14px] w-[13px] items-center justify-center bg-gradient-to-b from-[#f2f2f4] to-[#c9ccd2]">
                  <svg width="9" height="9" viewBox="0 0 9 9" fill="#444" stroke="#444" shapeRendering="crispEdges"><path d={d} /></svg>
                </span>
              ))}
            </div>
            <div className="relative ml-[7px] h-[17px] w-[112px]">
              <svg width="112" height="17" viewBox="0 0 112 17">
                <path d="M46 17l16-17h49L96 17z" fill="#cdd3dc" stroke="#eee" />
                <path d="M0 0h60L44 17H4z" fill="#fff" />
              </svg>
              <span className="absolute left-[7px] top-px font-bold leading-[17px]"><Fit t="*Model" c="w-[39px]" /></span>
              <span className="absolute left-[60px] top-px leading-[17px]"><Fit t="Sheet 1" c="w-[37px]" /></span>
            </div>
          </div>
        </div>
        <div className="h-[2px] bg-white" />
      </div>
    </div>
  );
}

const side: [string, string][] = [
  ["Crossing Window", "h-24"], ["Like Selected", "h-[73px]"], ["Select Last", "h-[61px]"], ["Notifier in Rect", "h-[80px]"],
  ["Initiator in Rect", "h-[81px]"], ["Wire Path in Rect", "h-[94px]"], ["WP Label in Rect", "h-[94px]"], ["Alarm Sys Comp in Rect", "h-[132px]"],
];

function RightBar() {
  return (
    <div className="ml-[2px] flex w-[25px] shrink-0 flex-col">
      <div className={"flex h-[851px] flex-col items-center pt-1 " + VBAR}>
        <HGrip c="mb-[9px]" />
        {side.map(([t, h], i) => (
          <div key={t} className="flex flex-col items-center">
            {i > 0 && <span className="mb-[9px] mt-[6px] h-[2px] w-[14px] border-t border-[#575c66] bg-white" />}
            <Fit v t={t} c={"font-['Liberation_Sans'] text-[12.5px] leading-[15px] text-black [writing-mode:vertical-rl] " + h} />
          </div>
        ))}
      </div>
      <VOver />
    </div>
  );
}

const Hot = ({ n }: { n: string }) => (
  <span className={"flex h-5 w-[22px] shrink-0 items-center justify-center border border-[#e0c090] " + HOT}><Ico n={n} /></span>
);
const Cell = ({ children }: { children: ReactNode }) => (
  <span className="flex w-[22px] shrink-0 items-center justify-center">{children}</span>
);

function BottomBars() {
  return (
    <div className="flex h-[25px] text-black">
      <div className={"flex w-[123px] items-center pl-1 " + BAR}>
        <Grip c="h-3" />
        <Ico n="calc" c="ml-[6px]" />
        <Ico n="go" c="ml-1" />
        <span className="ml-[8px] h-[15px] w-[60px] bg-white" />
      </div>
      <Overflow />
      <div className={"flex w-[315px] items-center pl-1 " + BAR}>
        <Grip c="mr-[3px] h-3" />
        {["target", "z0", "ruler"].map((n) => <Cell key={n}><Ico n={n} /></Cell>)}
        <Sep c="ml-[2px] mr-[4px] h-3.5" />
        <Cell><Ico n="tri" /></Cell>
        <Hot n="snapC" />
        <Hot n="snapE" />
        {["snapV", "snapX", "snapN", "snapT", "snapQ"].map((n) => <Cell key={n}><Ico n={n} /></Cell>)}
        <Sep c="ml-[3px] mr-[4px] h-3.5" />
        <Cell><Ico n="track" /></Cell>
        <Hot n="magnetK" />
      </div>
      <Overflow />
      <div className={"flex w-[430px] items-center pl-1 " + BAR}>
        <Grip c="mr-[3px] h-3" />
        <Cell><Ico n="iso" /></Cell>
        <Hot n="plan" />
        <Cell><Ico n="fit" /></Cell>
        <Cell><Ico n="zoomWin" /></Cell>
        <span className={"flex h-5 w-[86px] shrink-0 items-center justify-center border border-[#e0c090] " + HOT}><Fit t="Lock On Target" c="w-[77px]" /></span>
        <span className="ml-px flex"><Hot n="zoomIn" /></span>
        {["zoomOut", "sel", "prev", "next", "cam", "props", "frame", "turn", "burst", "checks"].map((n) => <Cell key={n}><Ico n={n} /></Cell>)}
      </div>
      <Overflow />
      <div className={"flex w-[341px] items-center pl-1 " + BAR}>
        <Grip c="h-3" />
        <span className="ml-[6px] flex h-[15px] w-[60px] items-center justify-center bg-white"><Fit t="90" c="w-3" /></span>
        <Sep c="ml-[6px] h-3.5" />
        <Ico n="rotL" c="ml-[6px]" />
        <Fit t="+Z" c="ml-1 w-[13px]" />
        <Ico n="rotR" c="ml-[9px]" />
        <Fit t="-Z" c="ml-[4px] w-[10px]" />
        <Sep c="ml-[9px] h-3.5" />
        <Ico n="up" c="ml-[5px]" />
        <Fit t="+X" c="ml-[5px] w-[13px]" />
        <Ico n="down" c="ml-[8px]" />
        <Fit t="-X" c="ml-[4px] w-[10px]" />
        <Sep c="ml-[9px] h-3.5" />
        <Ico n="left" c="ml-[5px]" />
        <Fit t="-Y" c="ml-[3px] w-[9px]" />
        <Ico n="right" c="ml-[8px]" />
        <Fit t="+Y" c="ml-[5px] w-3" />
      </div>
      <Overflow />
    </div>
  );
}

const cells: [string, string, string][] = [
  ["1 selected", "w-[50px]", "w-[57px]"],
  ["Elev1: 0'-0", "w-[52px]", "w-[57px]"],
  ["Text table", "w-[49px]", "w-[56px]"],
  ["# Off", "w-[27px]", "w-[33px]"],
  ["Foot", "w-[23px]", "w-[29px]"],
];

export default function App() {
  return (
    <div className="flex h-[1032px] w-[1920px] flex-col overflow-hidden bg-[#535353] font-['Noto_Sans',sans-serif] text-[12px] leading-4 text-[#111]">
      <div className="flex h-[23px] shrink-0 items-center bg-gradient-to-r from-[#f3f3f3] via-[#faefee] to-[#f9f2ec] pl-[2px]">
        <svg width="16" height="16" viewBox="0 0 16 16">
          <rect width="16" height="16" rx="2" fill="#404850" />
          <path d="M2 13L8 2l2 11h-3V9L5 13z" fill="#d8dde2" />
          <path d="M14 5c-3-3-6 0-5 3 0 4 4 5 5 2" stroke="#e02020" strokeWidth="2" fill="none" />
        </svg>
        <Fit t="AlarmCAD® 2023 Professional - [AlarmCAD Battery Calc - Smoke Test File.cad]" c="ml-[6px] w-[415px] text-[13px]" />
        <svg className="mb-[3px] ml-auto mr-[19px]" width="104" height="12" viewBox="0 0 104 12" fill="none" stroke="#111">
          <path d="M2 6.500h10M47.500 3.500h7v7h-7zM49.500 3.500v-2h7v7h-2M93 1l10 10M103 1L93 11" />
        </svg>
      </div>
      <div className="flex h-[23px] shrink-0 items-center pl-[3px] text-[#f0f0f0]">
        <svg width="16" height="16" viewBox="0 0 16 16" shapeRendering="crispEdges">
          <path d="M0 0h16v16H0z" fill="#fff" />
          <path d="M1 1.500h2M5 2.500h2M9 1.500h2M12 2.500h3M2 4.500h2M6 5.500h2M11 4.500h3M2 7.500h3M9 7.500h5M9.500 10v5M12 11.500h4M12 14.500h3" stroke="#000" fill="none" />
          <path d="M2 10h5v5H2z" />
          <path d="M6 4l5-2" stroke="#c04040" />
        </svg>
        <div className="ml-[10px] flex gap-[15px]">
          {menus.map(([t, w]) => (
            <Fit key={t} t={t} c={w} />
          ))}
        </div>
        <svg className="ml-auto mr-1" width="42" height="10" viewBox="0 0 42 10" fill="none" stroke="#9aa3b2" shapeRendering="crispEdges">
          <path d="M1 8h7" strokeWidth="2" />
          <path d="M16.500 3.500h7v4h-7zM18 1.500h7v4M33 1l6 7M34 1l6 7M40 1l-7 7M39 1l-6 7" />
        </svg>
      </div>
      <ToolRow1 />
      <ToolRow2 />
      <div className="flex h-[865px] shrink-0">
        <LeftBar />
        <LayersPanel />
        <Doc />
        <RightBar />
      </div>
      <div className="ml-[26px] flex h-[19px] w-[1868px] shrink-0 items-center bg-[linear-gradient(#3c424e_0_45%,#2e2e2e_45%_100%)] pl-[4px] pt-[3px] text-[#ececec]">
        <Fit t="Increases the camera magnification." c="w-[183px]" />
        <div className="ml-auto flex">
          {cells.map(([t, w, cw], i) => (
            <span key={t} className={"flex h-[15px] items-center border-l border-[#777] pl-[3px] " + cw + (i < 2 ? " mr-[6px] border-r" : "")}>
              <Fit t={t} c={w} />
            </span>
          ))}
        </div>
      </div>
      <BottomBars />
    </div>
  );
}
